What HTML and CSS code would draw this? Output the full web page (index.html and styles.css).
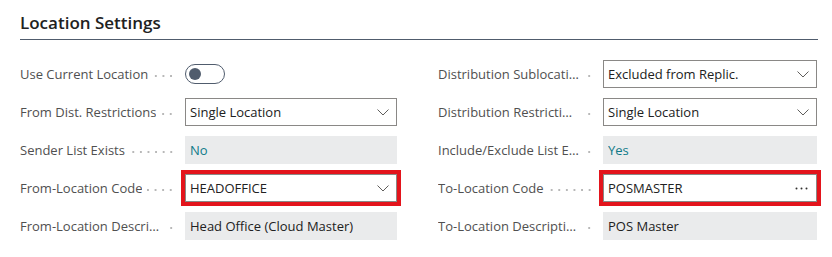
FILE: index.html
```html
<!DOCTYPE html>
<html>
<head>
<meta charset="utf-8">
<link rel="stylesheet" href="styles.css">
</head>
<body>
<div class="page">
  <h2 class="section-title">Location Settings</h2>
  <div class="grid">
    <div class="col">
      <div class="row">
        <div class="label"><span class="text">Use Current Location</span><span class="leader"></span></div>
        <div class="field"><span class="toggle"><span class="knob"></span></span></div>
      </div>
      <div class="row">
        <div class="label"><span class="text">From Dist. Restrictions</span><span class="leader"></span></div>
        <div class="field"><div class="input select"><span class="val">Single Location</span><svg class="chev" width="12" height="7" viewBox="0 0 12 7"><path d="M0.5 0.5 L6 6 L11.5 0.5" fill="none" stroke="#605e5c" stroke-width="1"/></svg></div></div>
      </div>
      <div class="row">
        <div class="label"><span class="text">Sender List Exists</span><span class="leader"></span></div>
        <div class="field"><div class="input ro"><span class="val link">No</span></div></div>
      </div>
      <div class="row">
        <div class="label"><span class="text">From-Location Code</span><span class="leader"></span></div>
        <div class="field"><div class="input select hl"><span class="val">HEADOFFICE</span><svg class="chev" width="12" height="7" viewBox="0 0 12 7"><path d="M0.5 0.5 L6 6 L11.5 0.5" fill="none" stroke="#605e5c" stroke-width="1"/></svg></div></div>
      </div>
      <div class="row">
        <div class="label"><span class="text">From-Location Description</span><span class="leader"></span></div>
        <div class="field"><div class="input ro"><span class="val">Head Office (Cloud Master)</span></div></div>
      </div>
    </div>
    <div class="col">
      <div class="row">
        <div class="label"><span class="text">Distribution Sublocation</span><span class="leader"></span></div>
        <div class="field"><div class="input select"><span class="val">Excluded from Replic.</span><svg class="chev" width="12" height="7" viewBox="0 0 12 7"><path d="M0.5 0.5 L6 6 L11.5 0.5" fill="none" stroke="#605e5c" stroke-width="1"/></svg></div></div>
      </div>
      <div class="row">
        <div class="label"><span class="text">Distribution Restrictions</span><span class="leader"></span></div>
        <div class="field"><div class="input select"><span class="val">Single Location</span><svg class="chev" width="12" height="7" viewBox="0 0 12 7"><path d="M0.5 0.5 L6 6 L11.5 0.5" fill="none" stroke="#605e5c" stroke-width="1"/></svg></div></div>
      </div>
      <div class="row">
        <div class="label"><span class="text">Include/Exclude List Exists</span><span class="leader"></span></div>
        <div class="field"><div class="input ro"><span class="val link">Yes</span></div></div>
      </div>
      <div class="row">
        <div class="label"><span class="text">To-Location Code</span><span class="leader"></span></div>
        <div class="field"><div class="input select hl"><span class="val">POSMASTER</span><svg class="more" width="13" height="3" viewBox="0 0 13 3"><circle cx="1.5" cy="1.5" r="1" fill="#323130"/><circle cx="6.5" cy="1.5" r="1" fill="#323130"/><circle cx="11.5" cy="1.5" r="1" fill="#323130"/></svg></div></div>
      </div>
      <div class="row">
        <div class="label"><span class="text">To-Location Description</span><span class="leader"></span></div>
        <div class="field"><div class="input ro"><span class="val">POS Master</span></div></div>
      </div>
    </div>
  </div>
</div>
</body>
</html>
```
FILE: styles.css
```css
* { box-sizing: border-box; }
html, body { margin: 0; padding: 0; background: #ffffff; }
body {
  font-family: "Segoe UI", "Open Sans", "Noto Sans", sans-serif;
  font-size: 13px;
  color: #212121;
}
.page { padding: 12px 14px 0 20px; }
.section-title {
  margin: 0;
  font-size: 17px;
  font-weight: 600;
  color: #212121;
  line-height: 22px;
  padding-bottom: 5px;
  border-bottom: 1px solid #505c6d;
}
.grid {
  display: grid;
  grid-template-columns: 377px 379px;
  column-gap: 41px;
  margin-top: 15px;
}
.row {
  display: flex;
  align-items: center;
  height: 38px;
}
.label {
  flex: 0 0 165px;
  display: flex;
  align-items: center;
  padding-right: 10px;
  color: #505050;
  min-width: 0;
}
.label .text {
  white-space: nowrap;
  overflow: hidden;
  text-overflow: ellipsis;
  min-width: 0;
}
.leader {
  flex: 1 0 10px;
  height: 2px;
  margin-left: 4px;
  margin-top: 4px;
  background-image: radial-gradient(circle, #b8b8b8 0.9px, transparent 1.1px);
  background-size: 7.6px 2px;
  background-position: right center;
  background-repeat: repeat-x;
}
.field { flex: 1; min-width: 0; display: flex; align-items: center; }
.input {
  width: 100%;
  height: 28px;
  display: flex;
  align-items: center;
  padding: 0 8px 0 4px;
  border: 1px solid transparent;
}
.input.select { border-color: #8a8886; background: #fff; }
.input.ro { background: #eaebec; }
.input.hl { outline: 4px solid #e3141c; }
.val { flex: 1; white-space: nowrap; overflow: hidden; text-overflow: ellipsis; color: #212121; }
.val.link { color: #0f7a88; }
.chev { flex: none; margin-right: -1px; }
.more { flex: none; margin-right: 0; }
.toggle {
  display: inline-block;
  position: relative;
  width: 40px;
  height: 20px;
  border: 1px solid #505c6d;
  border-radius: 10px;
}
.knob {
  position: absolute;
  left: 3px;
  top: 3px;
  width: 12px;
  height: 12px;
  border-radius: 50%;
  background: #505c6d;
}
```
